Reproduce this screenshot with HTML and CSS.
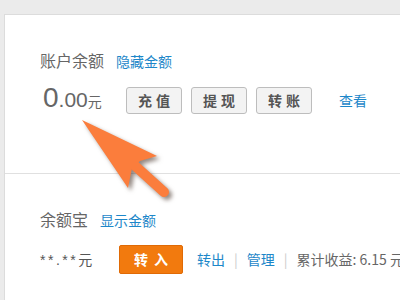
FILE: index.html
```html
<!DOCTYPE html>
<html lang="zh">
<head>
<meta charset="utf-8">
<link rel="stylesheet" href="styles.css">
</head>
<body>
<div class="card">
  <section class="sec">
    <div class="head"><span class="title">账户余额</span><a class="link">隐藏金额</a></div>
    <div class="row">
      <div class="amount"><span class="big">0</span><span class="mid">.00</span><span class="unit">元</span></div>
      <div class="btns">
        <span class="btn">充值</span>
        <span class="btn">提现</span>
        <span class="btn">转账</span>
      </div>
      <a class="link look">查看</a>
    </div>
  </section>
  <section class="sec sec2">
    <div class="head"><span class="title">余额宝</span><a class="link">显示金额</a></div>
    <div class="row row2">
      <div class="stars">**.**元</div>
      <span class="btn-orange">转入</span>
      <a class="link">转出</a><span class="sep">|</span><a class="link">管理</a><span class="sep">|</span><span class="earn">累计收益: 6.15 元</span>
    </div>
  </section>
</div>
<svg class="arrow" width="400" height="300" viewBox="0 0 400 300">
  <line x1="133" y1="164" x2="164" y2="192" stroke="#fb7d3c" stroke-width="10" stroke-linecap="round"/>
  <polygon points="82,120 157,156 140,161 132,168 128,188" fill="#fb7d3c"/>
</svg>
</body>
</html>
```
FILE: styles.css
```css
html, body { margin: 0; padding: 0; }
body {
  width: 400px; height: 300px; overflow: hidden;
  background: #ebebeb;
  font-family: "Noto Sans CJK SC", "Liberation Sans", sans-serif;
  padding: 14px 0 0 4px;
  box-sizing: border-box;
  position: relative;
}
.card {
  background: #fff;
  border-left: 1px solid #dcdcdc;
  border-top: 1px solid #dcdcdc;
  height: 286px;
  box-sizing: border-box;
  overflow: hidden;
}
.sec {
  padding: 34px 0 0 35px;
  box-sizing: border-box;
  border-bottom: 1px solid #e0e0e0;
  height: 159px;
}
.sec2 { border-bottom: none; padding-top: 34px; height: 126px; }
.head { display: flex; align-items: baseline; gap: 12px; height: 22px; line-height: 22px; }
.title { font-size: 16px; color: #666; }
.link { font-size: 14px; color: #1d87c9; white-space: nowrap; flex-shrink: 0; }
.row { display: flex; align-items: center; margin-top: 15px; height: 28px; }
.amount { font-family: "Liberation Sans", sans-serif; color: #666; width: 83px; padding-left: 3px; white-space: nowrap; line-height: 28px; flex-shrink: 0; }
.big { font-size: 28px; }
.mid { font-size: 21px; }
.unit { font-size: 14px; font-family: "Noto Sans CJK SC", sans-serif; }
.btns { display: flex; gap: 9px; flex-shrink: 0; }
.btn {
  box-sizing: border-box;
  width: 56px; height: 27px;
  border: 1px solid #bdbdbd; border-radius: 3px;
  background: #f3f3f3;
  color: #555; font-weight: bold; font-size: 14px;
  letter-spacing: 4px; text-indent: 4px;
  display: flex; align-items: center; justify-content: center;
  line-height: 1;
}
.look { margin-left: 27px; }
.row2 { margin-top: 15px; }
.stars { font-size: 14px; color: #555; width: 79px; flex-shrink: 0; letter-spacing: 2.5px; font-family: "Liberation Sans", "Noto Sans CJK SC", sans-serif; }
.btn-orange {
  box-sizing: border-box;
  flex-shrink: 0;
  width: 64px; height: 29px;
  background: #f27a0e; border: 1px solid #e06a05; border-radius: 2px;
  color: #fff; font-weight: bold; font-size: 14px;
  letter-spacing: 6px; text-indent: 6px;
  display: flex; align-items: center; justify-content: center;
  margin-right: 14px;
}
.sep { color: #ccc; font-size: 14px; margin: 0 9px; flex-shrink: 0; }
.earn { color: #666; font-size: 14px; white-space: nowrap; }
.arrow {
  position: absolute; left: 0; top: 0;
  filter: drop-shadow(3px 3px 2px rgba(60,40,30,0.55));
}
```
